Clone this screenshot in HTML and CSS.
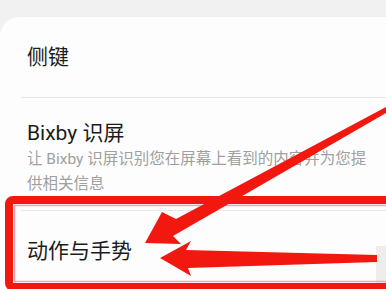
FILE: index.html
```html
<!DOCTYPE html>
<html lang="zh-CN">

<head>
    <meta charset="UTF-8">
    <meta name="viewport" content="width=device-width, initial-scale=1.0">
    <title>设置</title>
    <link rel="stylesheet" href="styles.css">
</head>

<body>
    <div class="screen">
        <div class="card">
            <div class="item">
                <div class="title">侧键</div>
            </div>
            <div class="divider"></div>
            <div class="item item-sub">
                <div class="title">Bixby 识屏</div>
                <div class="desc">让 Bixby 识屏识别您在屏幕上看到的内容并为您提供相关信息</div>
            </div>
            <div class="divider"></div>
            <div class="item">
                <div class="title">动作与手势</div>
            </div>
        </div>

        <!-- Annotation layer: red box and arrows drawn over the list -->
        <svg class="marks" width="386" height="289" viewBox="0 0 386 289">
            <rect x="376" y="246" width="12" height="43" fill="#efeceb" />
            <rect x="9" y="200" width="400" height="87" rx="4" fill="none" stroke="#f2180f" stroke-width="8" />
            <rect x="14.5" y="205.5" width="400" height="76" fill="none" stroke="#f6a3ab" stroke-width="1.5" />
            <polygon fill="#f2180f" points="145,243 162,212 176,219 386,107 386,113 173,236 181,244" />
            <polygon fill="#f2180f" points="160,258 191,241 186,250 377,255 377,262 188,268 191,276" />
        </svg>
    </div>
</body>

</html>
```

FILE: styles.css
```css
body {
    margin: 0;
    background-color: #f1f1f1;
    font-family: Roboto, "Noto Sans CJK SC", sans-serif;
}

.screen {
    position: relative;
    width: 386px;
    height: 289px;
    overflow: hidden;
}

.card {
    margin-top: 17px;
    background-color: #fdfdfd;
    border-top-left-radius: 20px;
}

.item {
    display: flex;
    flex-direction: column;
    justify-content: center;
    height: 80px;
    padding: 0 14px 0 27px;
}

.item-sub {
    height: auto;
    padding-top: 21px;
    padding-bottom: 13px;
}

.title {
    font-size: 21px;
    line-height: 28px;
    color: #1c1c1c;
}

.desc {
    font-size: 15.5px;
    line-height: 25px;
    color: #a0a0a0;
}

.divider {
    height: 1px;
    margin-left: 21px;
    background-color: #e8e8e8;
}

/* Annotation overlay */
.marks {
    position: absolute;
    top: 0;
    left: 0;
    pointer-events: none;
}
```
